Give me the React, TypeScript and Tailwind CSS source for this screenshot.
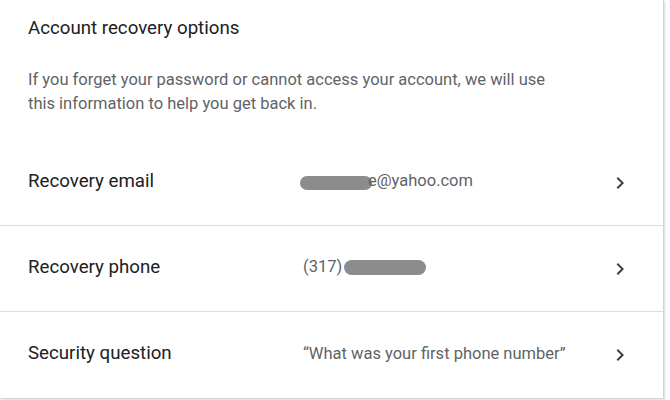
import React from 'react';

function Chevron() {
    return (
        <svg width="24" height="24" viewBox="0 0 24 24" className="shrink-0">
            <path d="M10 6 8.59 7.41 13.17 12l-4.58 4.59L10 18l6-6z" fill="#3c4043" />
        </svg>
    );
}

function Blob({ className }: { className: string }) {
    return <span className={`inline-block rounded-full bg-[#8c8c8c] align-middle ${className}`}></span>;
}

function Row({ label, children, last }: { label: string; children: React.ReactNode; last?: boolean }) {
    return (
        <div className={`flex items-center h-[86px] pl-7 pr-[31px] ${last ? '' : 'border-b border-[#dadce0]'}`}>
            <div className="w-[275px] shrink-0 text-[18.7px] text-[#202124] -mt-[3px]">{label}</div>
            <div className="flex-1 text-[16.5px] text-[#5f6368] flex items-center -mt-[2px]">{children}</div>
            <Chevron />
        </div>
    );
}

export default function App() {
    return (
        <div className="min-h-screen bg-white" style={{ fontFamily: 'Roboto, "Liberation Sans", sans-serif' }}>
            <div className="w-[664px] bg-white border-r border-b border-[#d4d4d4] shadow-[1px_1px_2px_rgba(0,0,0,0.15)]">
                {/* Header */}
                <div className="pl-7 pt-4 pb-[24px]">
                    <h2 className="text-[18.7px] leading-6 text-[#202124]">Account recovery options</h2>
                    <p className="mt-[28px] text-[16.5px] leading-6 text-[#5f6368] max-w-[540px]">
                        If you forget your password or cannot access your account, we will use this information to help you get back in.
                    </p>
                </div>

                <Row label="Recovery email">
                    <Blob className="w-[72px] h-[14px] -ml-[3px] mt-[2px]" />
                    <span className="-ml-[4px]">e@yahoo.com</span>
                </Row>
                <Row label="Recovery phone">
                    <span>(317)</span>
                    <Blob className="w-[82px] h-[15px] ml-[2px]" />
                </Row>
                <Row label="Security question" last>
                    <span>“What was your first phone number”</span>
                </Row>
            </div>
        </div>
    );
}
